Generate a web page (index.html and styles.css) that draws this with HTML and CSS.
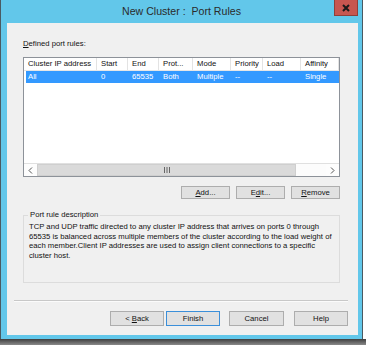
FILE: index.html
```html
<!DOCTYPE html>
<html>
<head>
<meta charset="utf-8">
<link rel="stylesheet" href="styles.css">
</head>
<body>
<div class="window">
  <div class="titlebar">
    <span class="title">New Cluster :&nbsp; Port Rules</span>
    <div class="close">
      <svg width="10" height="8" viewBox="0 0 10 8"><path d="M2 1 L8 7 M8 1 L2 7" stroke="#1a1a1a" stroke-width="2"/></svg>
    </div>
  </div>
  <div class="client">
    <div class="label"><u>D</u>efined port rules:</div>
    <div class="listview">
      <div class="lv-header">
        <div class="col c1">Cluster IP address</div>
        <div class="col c2">Start</div>
        <div class="col c3">End</div>
        <div class="col c4">Prot...</div>
        <div class="col c5">Mode</div>
        <div class="col c6">Priority</div>
        <div class="col c7">Load</div>
        <div class="col c8">Affinity</div>
      </div>
      <div class="lv-row">
        <div class="cell c1">All</div>
        <div class="cell c2">0</div>
        <div class="cell c3">65535</div>
        <div class="cell c4">Both</div>
        <div class="cell c5">Multiple</div>
        <div class="cell c6">--</div>
        <div class="cell c7">--</div>
        <div class="cell c8">Single</div>
      </div>
      <div class="lv-space"></div>
      <div class="hscroll">
        <div class="arrow">
          <svg width="5" height="7" viewBox="0 0 5 7"><path d="M4 0.5 L1 3.5 L4 6.5" fill="none" stroke="#555" stroke-width="1"/></svg>
        </div>
        <div class="thumb">
          <svg width="8" height="6" viewBox="0 0 8 6"><path d="M1.5 0 V6 M4 0 V6 M6.5 0 V6" stroke="#666" stroke-width="1"/></svg>
        </div>
        <div class="track"></div>
        <div class="arrow">
          <svg width="5" height="7" viewBox="0 0 5 7"><path d="M1 0.5 L4 3.5 L1 6.5" fill="none" stroke="#555" stroke-width="1"/></svg>
        </div>
      </div>
    </div>
    <div class="btnrow">
      <div class="btn small"><span><u>A</u>dd...</span></div>
      <div class="btn small"><span>E<u>d</u>it...</span></div>
      <div class="btn small"><span><u>R</u>emove</span></div>
    </div>
    <div class="groupbox">
      <span class="gb-label">Port rule description</span>
      <p class="desc">TCP and UDP traffic directed to any cluster IP address that arrives on ports 0 through 65535 is balanced across multiple members of the cluster according to the load weight of each member.Client IP addresses are used to assign client connections to a specific cluster host.</p>
    </div>
    <div class="separator"></div>
    <div class="navrow">
      <div class="btn nav"><span>&lt; <u>B</u>ack</span></div>
      <div class="btn nav default"><span>Finish</span></div>
      <div class="btn nav cancel"><span>Cancel</span></div>
      <div class="btn nav help"><span>Help</span></div>
    </div>
  </div>
</div>
<div class="shadow"></div>
</body>
</html>
```

FILE: styles.css
```css
html, body {
  margin: 0;
  padding: 0;
  background: #ffffff;
}
body {
  width: 366px;
  height: 345px;
  overflow: hidden;
  font-family: "Liberation Sans", Arial, sans-serif;
  font-size: 7.7px;
  color: #111;
}
.window {
  width: 363px;
  height: 339px;
  box-sizing: border-box;
  background: #62c7ea;
  border-left: 1px solid #4a5a62;
  border-right: 1px solid #4a5a62;
  display: flex;
  flex-direction: column;
}
.titlebar {
  position: relative;
  height: 23px;
  display: flex;
  align-items: center;
  justify-content: center;
}
.title {
  font-size: 10.6px;
  color: #2b2b2b;
  margin-top: -1px;
}
.close {
  position: absolute;
  right: 4px;
  top: 0;
  width: 24px;
  height: 16px;
  box-sizing: border-box;
  background: #c75650;
  border: 1px solid #8f3f3a;
  border-top: none;
  display: flex;
  align-items: center;
  justify-content: center;
}
.client {
  margin-left: 6px;
  width: 351px;
  height: 312px;
  box-sizing: border-box;
  background: #f0f0f0;
  padding: 16px 18px 0 16px;
  display: flex;
  flex-direction: column;
}
.label {
  height: 10px;
  line-height: 10px;
}
.listview {
  margin-top: 8px;
  height: 120px;
  box-sizing: border-box;
  border: 1px solid #8d9299;
  background: #fff;
  display: flex;
  flex-direction: column;
}
.lv-header {
  height: 12px;
  display: flex;
  border-bottom: 1px solid #e6e6e6;
  box-sizing: content-box;
}
.col {
  box-sizing: border-box;
  border-right: 1px solid #e3e3e3;
  padding-left: 4px;
  line-height: 12px;
  white-space: nowrap;
  overflow: hidden;
}
.c1 { width: 73px; }
.c2 { width: 31px; }
.c3 { width: 31px; }
.c4 { width: 34px; }
.c5 { width: 38px; }
.c6 { width: 32px; }
.c7 { width: 38px; }
.c8 { width: 38px; }
.lv-row {
  height: 12px;
  display: flex;
  margin-left: 2px;
  width: 313px;
  background: #3399ff;
  color: #fff;
}
.lv-row .c1 { width: 71px; padding-left: 2px; }
.cell {
  box-sizing: border-box;
  padding-left: 4px;
  line-height: 12px;
  white-space: nowrap;
  overflow: hidden;
}
.lv-space {
  flex: 1;
}
.hscroll {
  height: 13px;
  display: flex;
  background: #f0f0f0;
  border-top: 1px solid #e0e0e0;
  box-sizing: border-box;
}
.arrow {
  width: 13px;
  background: #fdfdfd;
  display: flex;
  align-items: center;
  justify-content: center;
}
.thumb {
  width: 259px;
  box-sizing: border-box;
  background: #dadada;
  border: 1px solid #cfcfcf;
  display: flex;
  align-items: center;
  justify-content: center;
}
.track {
  flex: 1;
  background: #fcfcfc;
}
.btnrow {
  margin-top: 9px;
  display: flex;
  justify-content: flex-end;
  gap: 6px;
}
.btn {
  box-sizing: border-box;
  background: #e1e1e1;
  border: 1px solid #adadad;
  display: flex;
  align-items: center;
  justify-content: center;
  white-space: pre;
}
.btn.small {
  width: 49px;
  height: 13px;
}
.groupbox {
  position: relative;
  margin-top: 16px;
  height: 68px;
  box-sizing: border-box;
  border: 1px solid #dcdcdc;
  padding: 6px 0 0 5px;
}
.gb-label {
  position: absolute;
  left: 4px;
  top: -6px;
  padding: 0 2px;
  background: #f0f0f0;
  line-height: 10px;
}
.desc {
  margin: 0;
  width: 306px;
  line-height: 9.7px;
}
.separator {
  margin: 17px -8px 0 -9px;
  height: 1px;
  background: #c8c8c8;
  border-bottom: 1px solid #fbfbfb;
}
.navrow {
  margin: 9px -8px 0 0;
  display: flex;
  justify-content: flex-end;
}
.btn.nav {
  width: 54px;
  height: 15px;
}
.btn.default {
  margin-left: 2px;
  border-color: #3b8fd9;
}
.btn.cancel {
  margin-left: 9px;
  width: 55px;
}
.btn.help {
  margin-left: 10px;
}
.shadow {
  width: 366px;
  height: 6px;
  background: linear-gradient(#3e3e3e, #8a8a8a);
}
```
